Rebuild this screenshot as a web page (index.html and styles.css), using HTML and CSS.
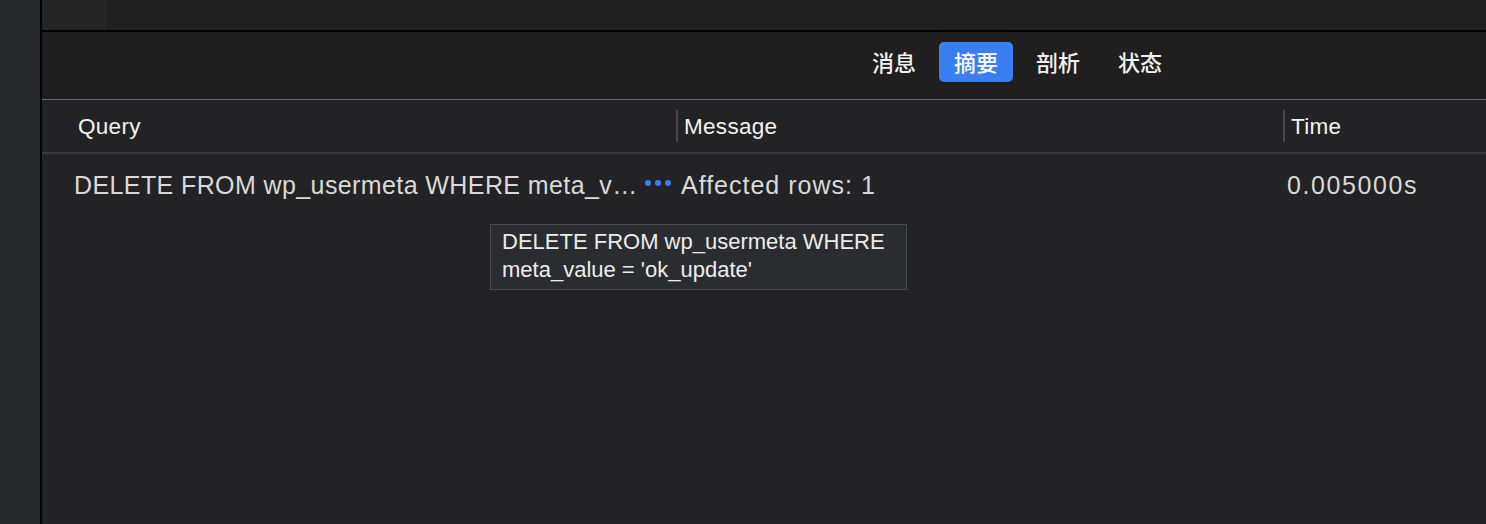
FILE: index.html
```html
<!DOCTYPE html>
<html lang="zh">
<head>
<meta charset="utf-8">
<title>Query results</title>
<link rel="stylesheet" href="styles.css">
</head>
<body>
<aside class="sidebar"></aside>
<main class="main">
  <div class="topstrip"><div class="tabstub"></div></div>
  <nav class="toolbar">
    <button class="tab">消息</button>
    <button class="tab active">摘要</button>
    <button class="tab">剖析</button>
    <button class="tab">状态</button>
  </nav>
  <section class="table">
    <div class="thead">
      <div class="th"><span class="sep hidden"></span><span class="label">Query</span></div>
      <div class="th"><span class="sep"></span><span class="label">Message</span></div>
      <div class="th"><span class="sep"></span><span class="label">Time</span></div>
    </div>
    <div class="row">
      <div class="td query">
        <span class="qtext">DELETE FROM wp_usermeta WHERE meta_v…</span>
        <span class="more"><i></i><i></i><i></i></span>
      </div>
      <div class="td msg">Affected rows: 1</div>
      <div class="td time">0.005000s</div>
    </div>
  </section>
</main>
<div class="tooltip">DELETE FROM wp_usermeta WHERE meta_value = 'ok_update'</div>
</body>
</html>
```

FILE: styles.css
```css
html, body {
  margin: 0;
  padding: 0;
}
body {
  width: 1486px;
  height: 524px;
  overflow: hidden;
  display: flex;
  background: #232325;
  font-family: "Liberation Sans", "Noto Sans CJK SC", sans-serif;
  color: #d9d9d9;
  position: relative;
}
.sidebar {
  width: 40px;
  flex: none;
  background: #28292d;
  border-right: 2px solid #000;
}
.main {
  flex: 1;
  display: flex;
  flex-direction: column;
  min-width: 0;
}
.topstrip {
  height: 30px;
  background: #202020;
  border-bottom: 2px solid #000;
  display: flex;
}
.tabstub {
  width: 64px;
  background: #262626;
}
.toolbar {
  height: 57px;
  padding-top: 10px;
  background: #1f1f1f;
  border-bottom: 1px solid #6a6a6a;
  display: flex;
  align-items: flex-start;
  gap: 8px;
  padding-left: 815px;
}
.tab {
  width: 74px;
  height: 40px;
  border: 0;
  border-radius: 5px;
  background: transparent;
  color: #f2f2f2;
  font-family: "Noto Sans CJK SC", sans-serif;
  font-size: 22px;
  font-weight: 500;
  padding: 0 0 3px;
  display: flex;
  align-items: center;
  justify-content: center;
}
.tab.active {
  background: #3b7ef1;
  color: #fff;
}
.thead, .row {
  display: grid;
  grid-template-columns: 606px 607px 1fr;
  padding-left: 28px;
}
.thead {
  height: 52px;
  border-bottom: 2px solid #3a3a3c;
}
.th {
  display: flex;
  align-items: center;
  gap: 6px;
  font-size: 22.5px;
  letter-spacing: 0.3px;
  color: #f2f2f2;
}
.th .label {
  padding-top: 2px;
}
.sep {
  width: 2px;
  height: 32px;
  background: #48484b;
}
.sep.hidden {
  background: transparent;
}
.row {
  padding-top: 11px;
}
.td {
  height: 40px;
  line-height: 40px;
  padding-left: 4px;
  font-size: 25px;
  letter-spacing: 0.4px;
  color: #d9d9d9;
  white-space: nowrap;
}
.td.msg {
  padding-left: 5px;
  letter-spacing: 1px;
}
.td.time {
  letter-spacing: 1.6px;
}
.td.query {
  display: flex;
  align-items: center;
  gap: 5px;
  padding-right: 5px;
  min-width: 0;
}
.qtext {
  flex: 1;
  min-width: 0;
  overflow: hidden;
}
.more {
  display: flex;
  gap: 4px;
  margin-top: -4px;
}
.more i {
  width: 6px;
  height: 6px;
  border-radius: 50%;
  background: #3b7ef1;
}
.tooltip {
  position: absolute;
  left: 490px;
  top: 224px;
  width: 417px;
  height: 66px;
  box-sizing: border-box;
  padding: 3px 20px 5px 11px;
  background: #2b2c2f;
  border: 1px solid #4a4b4e;
  font-size: 22px;
  line-height: 28px;
  color: #ececec;
}
```
